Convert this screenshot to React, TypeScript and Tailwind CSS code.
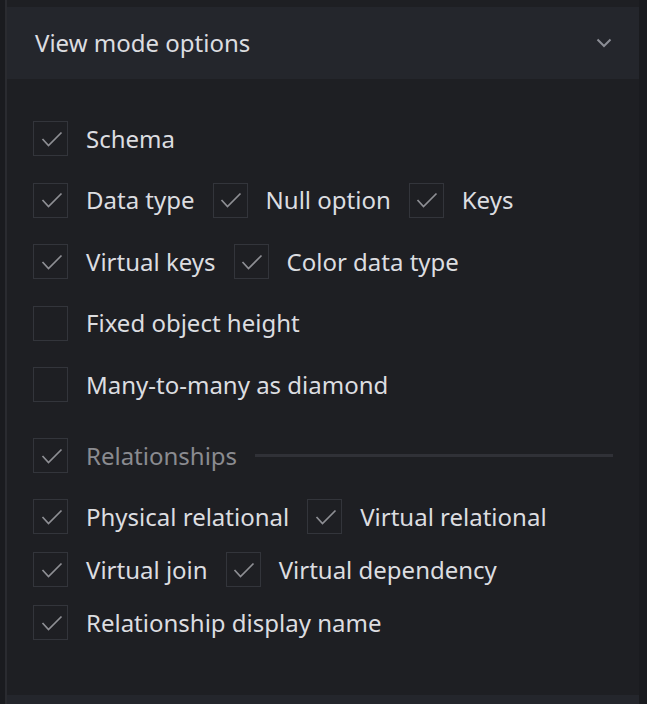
import React from "react";

function Check({ checked }: { checked: boolean }) {
  return (
    <span className="flex h-[35px] w-[35px] shrink-0 items-center justify-center border border-[#33353b] bg-[#1e1f23]">
      {checked && (
        <svg width="22" height="16" viewBox="0 0 22 16" fill="none" className="translate-x-px">
          <path d="M1.5 8 L7.5 14.5 L20.5 1.5" stroke="#8e8f94" strokeWidth="1.7" />
        </svg>
      )}
    </span>
  );
}

function Item({ label, checked = true, dim = false }: { label: string; checked?: boolean; dim?: boolean }) {
  return (
    <label className="flex items-center gap-[18px]">
      <Check checked={checked} />
      <span className={dim ? "text-[#8a8b90]" : "text-[#dcdde0]"}>{label}</span>
    </label>
  );
}

export default function App() {
  return (
    <div
      className="flex h-[704px] w-[647px] bg-[#1a1b1f] text-[24px] leading-none"
      style={{ fontFamily: '"Noto Sans", "Open Sans", sans-serif' }}
    >
      <div className="flex w-[7px] shrink-0">
        <div className="w-[5px] bg-[#1a1b1f]" />
        <div className="w-[2px] bg-[#2a2b30]" />
      </div>
      <div className="flex w-[632px] flex-col bg-[#1e1f23] pt-[7px]">
        <div className="flex h-[72px] items-center justify-between bg-[#24262c] pl-[28px] pr-[27px]">
          <span className="text-[#dcdde0]">View mode options</span>
          <svg width="16" height="10" viewBox="0 0 16 10" fill="none">
            <path d="M1.5 1.5 L8 8 L14.5 1.5" stroke="#8b8d95" strokeWidth="2" />
          </svg>
        </div>
        <div className="flex flex-1 flex-col pl-[26px] pr-[26px] pt-[42px]">
          <div className="flex flex-col gap-[26.5px]">
            <Item label="Schema" />
            <div className="flex items-center gap-[18px]">
              <Item label="Data type" />
              <Item label="Null option" />
              <Item label="Keys" />
            </div>
            <div className="flex items-center gap-[18px]">
              <Item label="Virtual keys" />
              <Item label="Color data type" />
            </div>
            <Item label="Fixed object height" checked={false} />
            <Item label="Many-to-many as diamond" checked={false} />
          </div>
          <div className="mt-[36px] flex items-center gap-[18px]">
            <Item label="Relationships" dim />
            <div className="h-[3px] flex-1 bg-[#303137]" />
          </div>
          <div className="mt-[26px] flex flex-col gap-[18px]">
            <div className="flex items-center gap-[18px]">
              <Item label="Physical relational" />
              <Item label="Virtual relational" />
            </div>
            <div className="flex items-center gap-[18px]">
              <Item label="Virtual join" />
              <Item label="Virtual dependency" />
            </div>
            <Item label="Relationship display name" />
          </div>
        </div>
        <div className="h-[9px] bg-[#24262c]" />
      </div>
      <div className="w-[8px] bg-[#1a1b1f]" />
    </div>
  );
}
